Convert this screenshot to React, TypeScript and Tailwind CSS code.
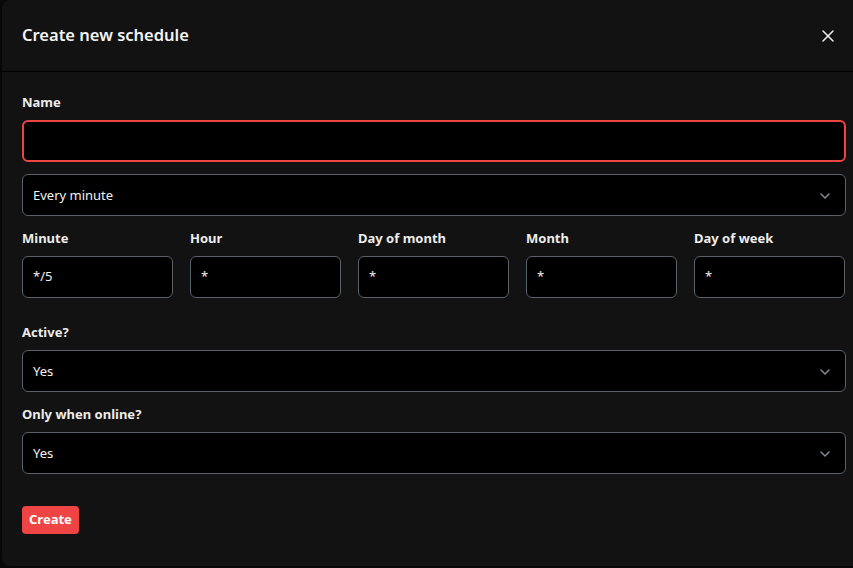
import { X, ChevronDown } from "lucide-react"

const fields = [
  { label: "Minute", value: "*/5" },
  { label: "Hour", value: "*" },
  { label: "Day of month", value: "*" },
  { label: "Month", value: "*" },
  { label: "Day of week", value: "*" },
]

function SelectBox({ value }: { value: string }) {
  return (
    <div className="flex h-[42px] items-center justify-between rounded-md border border-[#5b606b] bg-black pl-[10px] pr-[12px] pt-px text-[13px] text-[#f2f2f2]">
      <span>{value}</span>
      <ChevronDown className="h-4 w-4 text-[#8a8f99]" strokeWidth={2} />
    </div>
  )
}

function Label({ children }: { children: React.ReactNode }) {
  return <div className="mb-2 h-5 text-[13px] font-bold leading-5 text-[#ececec]">{children}</div>
}

export default function App() {
  return (
    <div className="h-[568px] w-full overflow-hidden bg-[#080808]" style={{ fontFamily: '"Noto Sans", "Open Sans", sans-serif' }}>
      <div className="ml-[2px] h-[566px] w-[864px] rounded-lg bg-[#121212]">
        <div className="flex h-[72px] items-center justify-between border-b border-black pl-5 pr-[28px]">
          <h2 className="text-[16.5px] font-semibold text-[#f4f4f4]">Create new schedule</h2>
          <button className="text-[#f0f0f0]">
            <X className="h-5 w-5" strokeWidth={1.75} />
          </button>
        </div>

        <div className="px-5 pt-5">
          <Label>Name</Label>
          <div className="h-[42px] rounded-md border-2 border-[#ef4444] bg-black" />

          <div className="mt-3">
            <SelectBox value="Every minute" />
          </div>

          <div className="mt-3 grid grid-cols-[repeat(5,151px)] gap-[17px]">
            {fields.map((f) => (
              <div key={f.label}>
                <Label>{f.label}</Label>
                <div className="flex h-[42px] items-center rounded-md border border-[#5b606b] bg-black pl-[10px] text-[13px] text-[#f2f2f2]">
                  {f.value}
                </div>
              </div>
            ))}
          </div>

          <div className="mt-6">
            <Label>Active?</Label>
            <SelectBox value="Yes" />
          </div>

          <div className="mt-3">
            <Label>Only when online?</Label>
            <SelectBox value="Yes" />
          </div>

          <button className="mt-8 h-7 rounded bg-[#ef4444] px-[7px] text-[13px] font-bold text-white">Create</button>
        </div>
      </div>
    </div>
  )
}
